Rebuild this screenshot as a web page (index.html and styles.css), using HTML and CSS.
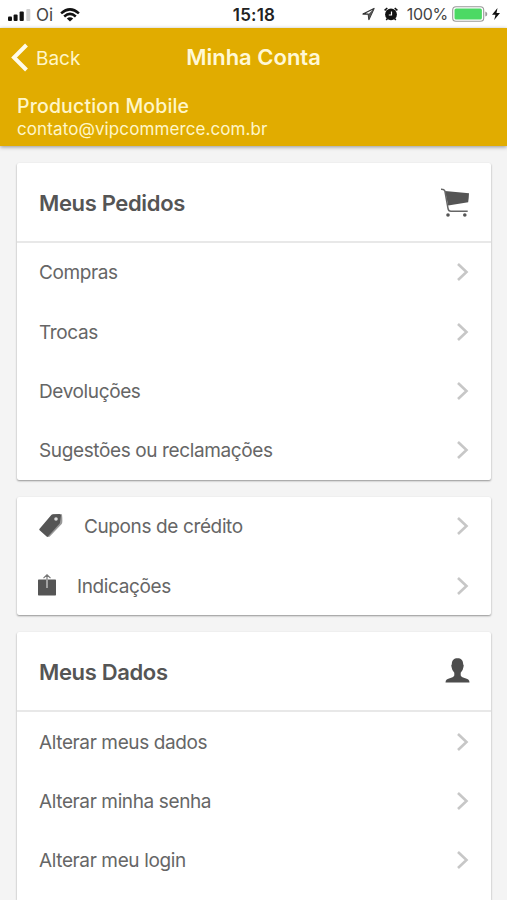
FILE: index.html
```html
<!DOCTYPE html>
<html lang="pt-BR">
<head>
<meta charset="utf-8">
<title>Minha Conta</title>
<link rel="stylesheet" href="styles.css">
</head>
<body>
<svg class="defs" width="0" height="0"><symbol id="chevron" viewBox="0 0 14 20"><path d="M2 2l8.500 8L2 18" fill="none" stroke="#c7c7c7" stroke-width="2.600"/></symbol></svg>
<div class="status">
  <div class="status-left">
    <svg width="23" height="14" viewBox="0 0 23 14"><g fill="#111"><rect x="0" y="8.500" width="4" height="4.500" rx="1"/><rect x="5.600" y="6.500" width="4" height="6.500" rx="1"/><rect x="11.600" y="3.500" width="4.200" height="9.500" rx="1"/></g><rect x="18.300" y="1" width="4" height="12" rx="1" fill="#cfcfcf"/></svg>
    <span class="carrier">Oi</span>
    <svg class="wifi" width="20" height="14" viewBox="0 0 20 14"><g fill="none" stroke="#111" stroke-width="2.500"><path d="M1.100 5.400Q10-2.600 18.900 5.400"/><path d="M4.200 8.500Q10 3.300 15.800 8.500"/></g><path d="M6.800 10.500Q10 7.800 13.200 10.500L10 13.600Z" fill="#111"/></svg>
  </div>
  <span class="clock">15:18</span>
  <div class="status-right">
    <svg width="13" height="14" viewBox="0 0 13 14"><path d="M1 7L12 1.500 6.900 12.500 6.300 7.200Z" fill="none" stroke="#333" stroke-width="1.300" stroke-linejoin="round"/><path d="M6.300 7.200L12 1.500 6.900 12.500Z" fill="#555"/></svg>
    <svg class="alarm" width="14" height="14" viewBox="0 0 14 14"><circle cx="7" cy="7.400" r="5.900" fill="#111"/><path d="M.6 3.400L3.300 1M13.400 3.400L10.700 1M3.500 11.500L2.200 13M10.500 11.500L11.800 13" stroke="#111" stroke-width="1.500"/><path d="M7.500 4.500V8H4.800" fill="none" stroke="#fff" stroke-width="1.200"/></svg>
    <span class="percent">100%</span>
    <svg class="battery" width="36" height="16" viewBox="0 0 36 16"><rect x=".7" y=".7" width="31" height="14.600" rx="3.300" fill="#fff" stroke="#999" stroke-width="1.100"/><rect x="2.500" y="2.500" width="27.400" height="11" rx="1.600" fill="#4cd964"/><path d="M33.300 5.500Q35.300 6 35.300 8T33.300 10.500Z" fill="#999"/></svg>
    <svg class="bolt" width="8" height="12" viewBox="0 0 8 12"><path d="M5.500 0L0 6.800h3.500L2.200 12 8 4.900H4.500Z" fill="#111"/></svg>
  </div>
</div>
<header class="header">
  <div class="nav">
    <a class="back"><svg width="18" height="29" viewBox="0 0 18 29"><path d="M15.500 2L3 14.500 15.500 27" fill="none" stroke="#fffceb" stroke-width="4"/></svg><span>Back</span></a>
    <h1 class="title">Minha Conta</h1>
  </div>
  <div class="user"><div class="name">Production Mobile</div><div class="email">contato@vipcommerce.com.br</div></div>
</header>
<main class="content">
  <section class="card">
    <div class="card-head"><h2 class="orders">Meus Pedidos</h2>
      <svg width="30" height="30" viewBox="0 0 30 30"><path d="M5 4L29 6.300Q28.800 11 28.200 15.300L8.200 18.500Z" fill="#555"/><path d="M1 2.200Q4.200 2.100 4.900 4L8 21.300Q8.400 24.200 11 24.200H27.700" fill="none" stroke="#666" stroke-width="1.500"/><circle cx="8" cy="28" r="1.800" fill="#555"/><circle cx="24.800" cy="28" r="1.800" fill="#555"/></svg>
    </div>
    <a class="row"><span>Compras</span><svg class="chev"><use href="#chevron"/></svg></a>
    <a class="row"><span>Trocas</span><svg class="chev"><use href="#chevron"/></svg></a>
    <a class="row"><span>Devoluções</span><svg class="chev"><use href="#chevron"/></svg></a>
    <a class="row"><span>Sugestões ou reclamações</span><svg class="chev"><use href="#chevron"/></svg></a>
  </section>
  <section class="card">
    <a class="row"><svg class="tag" width="24" height="24" viewBox="0 0 24 24"><path d="M13.200.5L23 .3Q23.900 9 22.700 10L10.500 22.700 8 23 20 9.500Z" fill="#999"/><path d="M12.500.7Q13 .3 14 .3L20.500 0Q22 0 22 1.500L21 8.600Q21 9.300 20.300 10L9 22.600Q8.400 23.200 7.600 22.600L.6 16.200Q-.1 15.500.6 14.800Z" fill="#555"/><circle cx="17" cy="5" r="1.800" fill="#ddd"/></svg><span>Cupons de crédito</span><svg class="chev"><use href="#chevron"/></svg></a>
    <a class="row"><svg class="share" width="18" height="22" viewBox="0 0 18 22"><rect x="0" y="5.500" width="18" height="16" rx=".7" fill="#555"/><path d="M9 5.500V14" stroke="#ccc" stroke-width="1.300"/><path d="M9 5.500V.9M5.500 4.100L9 .8 12.500 4.100" fill="none" stroke="#777" stroke-width="1.200"/></svg><span>Indicações</span><svg class="chev"><use href="#chevron"/></svg></a>
  </section>
  <section class="card">
    <div class="card-head"><h2 class="data">Meus Dados</h2>
      <svg width="25" height="25" viewBox="0 0 25 25"><path d="M6.800 6.200C6.900 2.200 9 .3 12.500.3S18.100 2.200 18.200 6.200Q19.200 7 18.400 9.200Q18 12.600 15.700 14.800V17.500Q16.200 19.300 19.500 20Q24.500 21 24.500 24.400H.5Q.5 21 5.500 20Q8.800 19.300 9.300 17.500V14.800Q7 12.600 6.600 9.200Q5.800 7 6.800 6.200Z" fill="#4d4d4d"/></svg>
    </div>
    <a class="row"><span>Alterar meus dados</span><svg class="chev"><use href="#chevron"/></svg></a>
    <a class="row"><span>Alterar minha senha</span><svg class="chev"><use href="#chevron"/></svg></a>
    <a class="row"><span>Alterar meu login</span><svg class="chev"><use href="#chevron"/></svg></a>
  </section>
</main>
</body>
</html>
```
FILE: styles.css
```css
* { box-sizing: border-box; }
body { margin: 0; height: 900px; display: flex; flex-direction: column; overflow: hidden; background: #f4f4f4; color: #666; font-family: Inter, sans-serif; }
svg { display: block; flex: none; }
.defs { position: absolute; }
h1, h2 { margin: 0; }
.status { flex: none; height: 28px; background: #fff; display: grid; grid-template-columns: 1fr auto 1fr; align-items: center; padding: 1px 7px 0 8px; color: #222; }
.status-left, .status-right { display: flex; align-items: center; }
.status-right { justify-content: flex-end; padding-bottom: 1px; }
.carrier { font-size: 17px; margin-left: 5px; color: #444; }
.wifi { margin-left: 7px; }
.clock { font-size: 17px; font-weight: 600; letter-spacing: .2px; }
.alarm { margin-left: 9px; }
.percent { font-size: 16px; letter-spacing: -.3px; margin-left: 9px; color: #444; }
.battery { margin-left: 4px; }
.bolt { margin-left: 4px; }
.header { flex: none; height: 118px; background: #e1ac00; color: #fff6c8; box-shadow: 0 1px 4px rgba(0,0,0,.4); }
.nav { height: 58px; display: grid; grid-template-columns: 1fr auto 1fr; align-items: center; padding: 0 11px; }
.back { display: flex; align-items: center; font-size: 19px; gap: 7px; }
.back span { padding-top: 2px; }
.title { font-size: 22px; line-height: 28px; font-weight: 600; color: #fff8d6; }
.user { padding: 7px 17px 0; }
.name { font-size: 19.500px; line-height: 26px; font-weight: 500; letter-spacing: .15px; }
.email { font-size: 17px; line-height: 21px; letter-spacing: .1px; }
.content { flex: 1; min-height: 0; padding: 16.600px 16px 0 17px; display: flex; flex-direction: column; gap: 16.500px; }
.card { flex: none; background: #fff; border-radius: 2px; box-shadow: 0 1px 2px rgba(0,0,0,.4); }
.card:last-child { flex: 1; min-height: 0; border-radius: 2px 2px 0 0; }
.card-head { height: 80px; padding: 0 21px 0 22px; border-bottom: 2px solid #e8e8e8; display: flex; align-items: center; justify-content: space-between; }
.card-head h2 { font-size: 22px; line-height: 30px; font-weight: 600; color: #555; padding-top: 2px; letter-spacing: -.35px; }
.row { height: 59.400px; padding: 0 21px 0 22px; display: flex; align-items: center; font-size: 19px; letter-spacing: -.38px; color: #666; }
.row span { padding-top: 1px; }
.chev { width: 14px; height: 20px; margin-left: auto; }
.tag { margin-right: 21px; }
.share { margin-left: -1px; margin-right: 21px; margin-top: -2px; }
```
